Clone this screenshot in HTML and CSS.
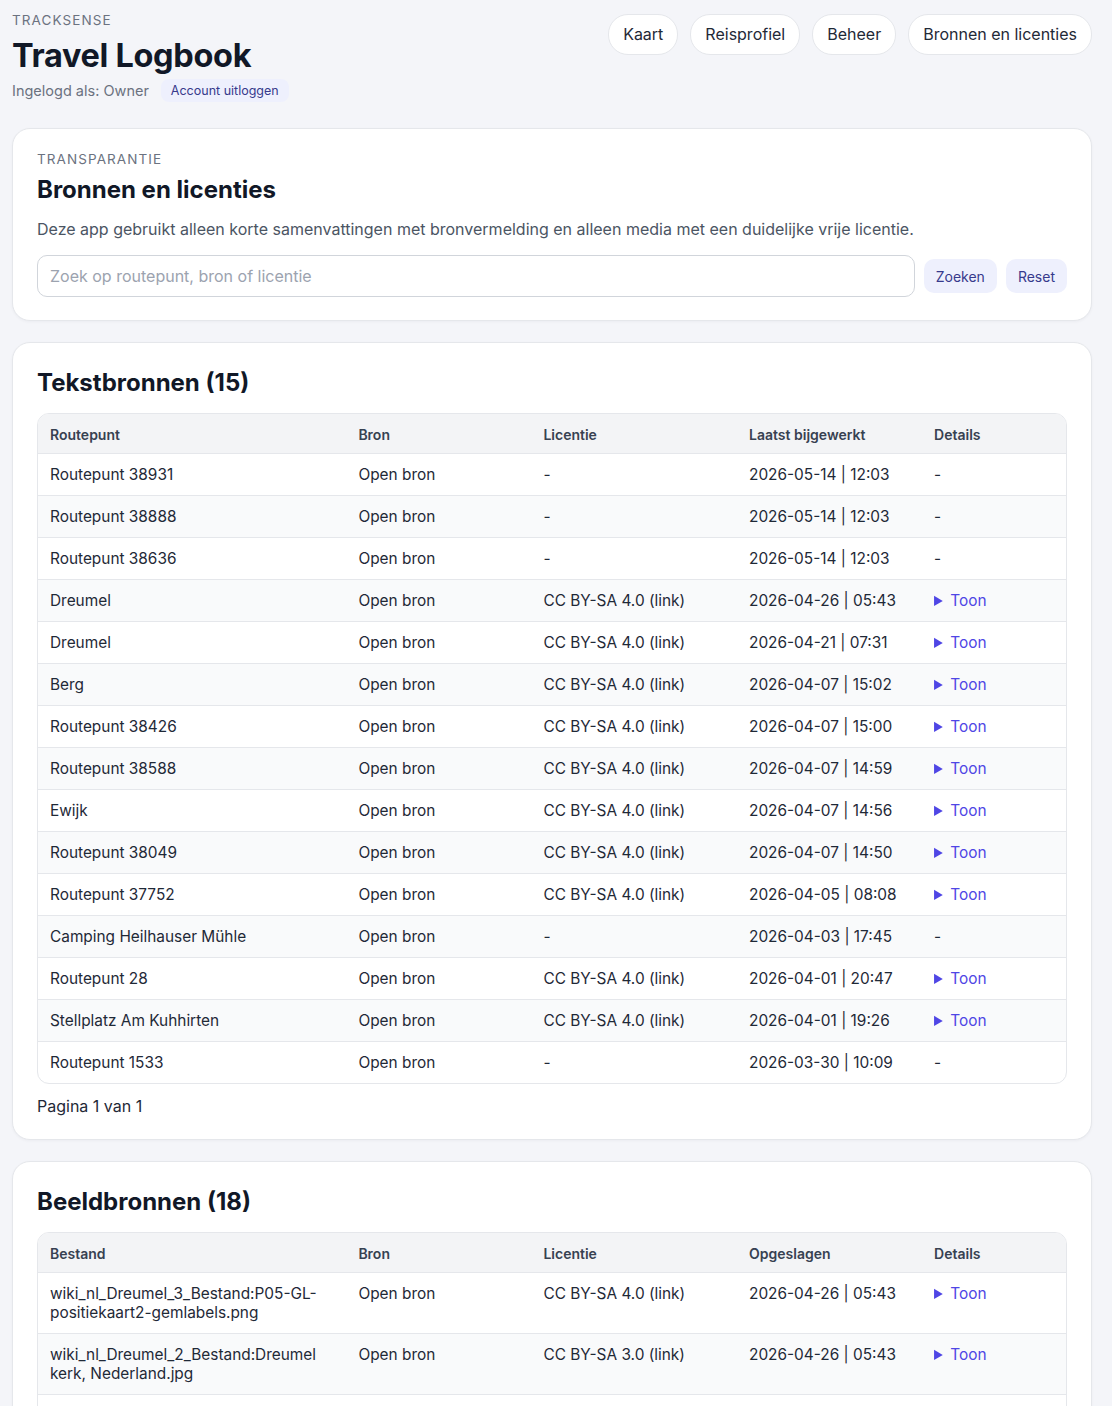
FILE: index.html
```html
<!DOCTYPE html>
<html lang="nl">
<head>
    <meta charset="UTF-8">
    <title>Travel Logbook - Bronnen en licenties</title>
    <link rel="stylesheet" href="styles.css">
</head>
<body>
    <div class="page">
        <header class="topbar">
            <div class="brand">
                <div class="eyebrow">TRACKSENSE</div>
                <h1>Travel Logbook</h1>
                <div class="user-line">
                    <span>Ingelogd als: Owner</span>
                    <a class="chip" href="#">Account uitloggen</a>
                </div>
            </div>
            <nav class="nav">
                <a class="nav-pill" href="#">Kaart</a>
                <a class="nav-pill" href="#">Reisprofiel</a>
                <a class="nav-pill" href="#">Beheer</a>
                <a class="nav-pill" href="#">Bronnen en licenties</a>
            </nav>
        </header>

        <section class="card intro">
            <div class="eyebrow">TRANSPARANTIE</div>
            <h2>Bronnen en licenties</h2>
            <p class="lead">Deze app gebruikt alleen korte samenvattingen met bronvermelding en alleen media met een duidelijke vrije licentie.</p>
            <form class="search">
                <input type="text" placeholder="Zoek op routepunt, bron of licentie">
                <button type="button" class="soft-btn">Zoeken</button>
                <button type="button" class="soft-btn">Reset</button>
            </form>
        </section>

        <section class="card">
            <h2 class="section-title">Tekstbronnen (15)</h2>
            <div class="table-wrap">
                <table>
                    <thead>
                        <tr><th>Routepunt</th><th>Bron</th><th>Licentie</th><th>Laatst bijgewerkt</th><th>Details</th></tr>
                    </thead>
                    <tbody>
                        <tr><td>Routepunt 38931</td><td>Open bron</td><td>-</td><td>2026-05-14 | 12:03</td><td>-</td></tr>
                        <tr><td>Routepunt 38888</td><td>Open bron</td><td>-</td><td>2026-05-14 | 12:03</td><td>-</td></tr>
                        <tr><td>Routepunt 38636</td><td>Open bron</td><td>-</td><td>2026-05-14 | 12:03</td><td>-</td></tr>
                        <tr><td>Dreumel</td><td>Open bron</td><td>CC BY-SA 4.0 (link)</td><td>2026-04-26 | 05:43</td><td><details><summary>Toon</summary></details></td></tr>
                        <tr><td>Dreumel</td><td>Open bron</td><td>CC BY-SA 4.0 (link)</td><td>2026-04-21 | 07:31</td><td><details><summary>Toon</summary></details></td></tr>
                        <tr><td>Berg</td><td>Open bron</td><td>CC BY-SA 4.0 (link)</td><td>2026-04-07 | 15:02</td><td><details><summary>Toon</summary></details></td></tr>
                        <tr><td>Routepunt 38426</td><td>Open bron</td><td>CC BY-SA 4.0 (link)</td><td>2026-04-07 | 15:00</td><td><details><summary>Toon</summary></details></td></tr>
                        <tr><td>Routepunt 38588</td><td>Open bron</td><td>CC BY-SA 4.0 (link)</td><td>2026-04-07 | 14:59</td><td><details><summary>Toon</summary></details></td></tr>
                        <tr><td>Ewijk</td><td>Open bron</td><td>CC BY-SA 4.0 (link)</td><td>2026-04-07 | 14:56</td><td><details><summary>Toon</summary></details></td></tr>
                        <tr><td>Routepunt 38049</td><td>Open bron</td><td>CC BY-SA 4.0 (link)</td><td>2026-04-07 | 14:50</td><td><details><summary>Toon</summary></details></td></tr>
                        <tr><td>Routepunt 37752</td><td>Open bron</td><td>CC BY-SA 4.0 (link)</td><td>2026-04-05 | 08:08</td><td><details><summary>Toon</summary></details></td></tr>
                        <tr><td>Camping Heilhauser Mühle</td><td>Open bron</td><td>-</td><td>2026-04-03 | 17:45</td><td>-</td></tr>
                        <tr><td>Routepunt 28</td><td>Open bron</td><td>CC BY-SA 4.0 (link)</td><td>2026-04-01 | 20:47</td><td><details><summary>Toon</summary></details></td></tr>
                        <tr><td>Stellplatz Am Kuhhirten</td><td>Open bron</td><td>CC BY-SA 4.0 (link)</td><td>2026-04-01 | 19:26</td><td><details><summary>Toon</summary></details></td></tr>
                        <tr><td>Routepunt 1533</td><td>Open bron</td><td>-</td><td>2026-03-30 | 10:09</td><td>-</td></tr>
                    </tbody>
                </table>
            </div>
            <p class="pager">Pagina 1 van 1</p>
        </section>

        <section class="card">
            <h2 class="section-title">Beeldbronnen (18)</h2>
            <div class="table-wrap">
                <table>
                    <thead>
                        <tr><th>Bestand</th><th>Bron</th><th>Licentie</th><th>Opgeslagen</th><th>Details</th></tr>
                    </thead>
                    <tbody>
                        <tr><td>wiki_nl_Dreumel_3_Bestand:P05-GL-positiekaart2-gemlabels.png</td><td>Open bron</td><td>CC BY-SA 4.0 (link)</td><td>2026-04-26 | 05:43</td><td><details><summary>Toon</summary></details></td></tr>
                        <tr><td>wiki_nl_Dreumel_2_Bestand:Dreumel kerk, Nederland.jpg</td><td>Open bron</td><td>CC BY-SA 3.0 (link)</td><td>2026-04-26 | 05:43</td><td><details><summary>Toon</summary></details></td></tr>
                        <tr><td>wiki_nl_Dreumel_1_Bestand:Dreumel, Nederland.jpg</td><td>Open bron</td><td>CC BY-SA 4.0 (link)</td><td>2026-04-26 | 05:43</td><td><details><summary>Toon</summary></details></td></tr>
                    </tbody>
                </table>
            </div>
        </section>
    </div>
</body>
</html>
```

FILE: styles.css
```css
body {
    margin: 0;
    background-color: #f4f5f9;
    color: #1f2937;
    font-family: 'Inter', 'Noto Sans', sans-serif;
}

.page {
    padding: 12px 20px 40px 12px;
}

.topbar {
    display: flex;
    justify-content: space-between;
    align-items: flex-start;
    margin-bottom: 26px;
}

.eyebrow {
    font-size: 13.5px;
    letter-spacing: 0.08em;
    color: #6b7280;
    line-height: 16px;
}

h1 {
    margin: 9px 0 0;
    font-size: 32.5px;
    line-height: 38px;
    font-weight: 700;
    color: #111827;
    letter-spacing: -0.01em;
}

.user-line {
    display: flex;
    align-items: center;
    gap: 12px;
    margin-top: 4px;
    font-size: 14.5px;
    color: #6b7280;
}

.chip {
    background-color: #eef0fd;
    color: #373a8c;
    font-size: 12.5px;
    padding: 4px 10px;
    border-radius: 8px;
    text-decoration: none;
}

.nav {
    display: flex;
    gap: 12px;
    margin-top: 2px;
}

.nav-pill {
    display: block;
    background-color: #fff;
    border: 1px solid #e5e7eb;
    border-radius: 20px;
    padding: 0 14px;
    height: 41px;
    line-height: 39px;
    box-sizing: border-box;
    font-size: 16px;
    color: #1f2937;
    text-decoration: none;
}

.card {
    background-color: #fff;
    border: 1px solid #e5e7eb;
    border-radius: 18px;
    padding: 22px 24px 23px;
    margin-bottom: 21px;
    box-shadow: 0 1px 3px rgba(17, 24, 39, 0.04);
}

h2 {
    margin: 8px 0 0;
    font-size: 24px;
    line-height: 30px;
    font-weight: 700;
    color: #111827;
}

.lead {
    margin: 13px 0 0;
    font-size: 16px;
    line-height: 22px;
    color: #4b5563;
}

.search {
    display: flex;
    align-items: center;
    gap: 9px;
    margin-top: 15px;
}

.search input {
    flex: 1;
    height: 42px;
    box-sizing: border-box;
    border: 1px solid #d1d5db;
    border-radius: 10px;
    padding: 0 12px;
    font-family: inherit;
    font-size: 16px;
    color: #1f2937;
}

.search input::placeholder {
    color: #9ca3af;
}

.soft-btn {
    background-color: #eef0fd;
    color: #373a8c;
    border: none;
    border-radius: 10px;
    height: 34px;
    padding: 0 12px;
    font-family: inherit;
    font-size: 14px;
    cursor: pointer;
}

.section-title {
    margin: 0;
    padding-top: 1px;
    line-height: 34px;
}

.table-wrap {
    margin-top: 13px;
    border: 1px solid #e5e7eb;
    border-radius: 12px;
    overflow: hidden;
}

table {
    width: 100%;
    border-collapse: collapse;
    table-layout: fixed;
}

th:nth-child(1) { width: 30%; }
th:nth-child(2) { width: 18%; }
th:nth-child(3) { width: 20%; }
th:nth-child(4) { width: 18%; }

th {
    box-sizing: border-box;
    text-align: left;
    background-color: #f3f4f6;
    font-size: 14px;
    font-weight: 600;
    color: #374151;
    padding: 11px 12px 9px;
    line-height: 19px;
    border-bottom: 1px solid #e5e7eb;
}

td {
    font-size: 15.4px;
    line-height: 19px;
    padding: 11px 12px;
    vertical-align: top;
    border-bottom: 1px solid #e5e7eb;
}

tbody tr:nth-child(even) td {
    background-color: #f9fafb;
}

tbody tr:last-child td {
    border-bottom: none;
}

details summary {
    color: #4f46e5;
    cursor: pointer;
    white-space: nowrap;
}

.pager {
    margin: 12px 0 0;
    font-size: 16px;
    line-height: 20px;
    color: #1f2937;
}
```
